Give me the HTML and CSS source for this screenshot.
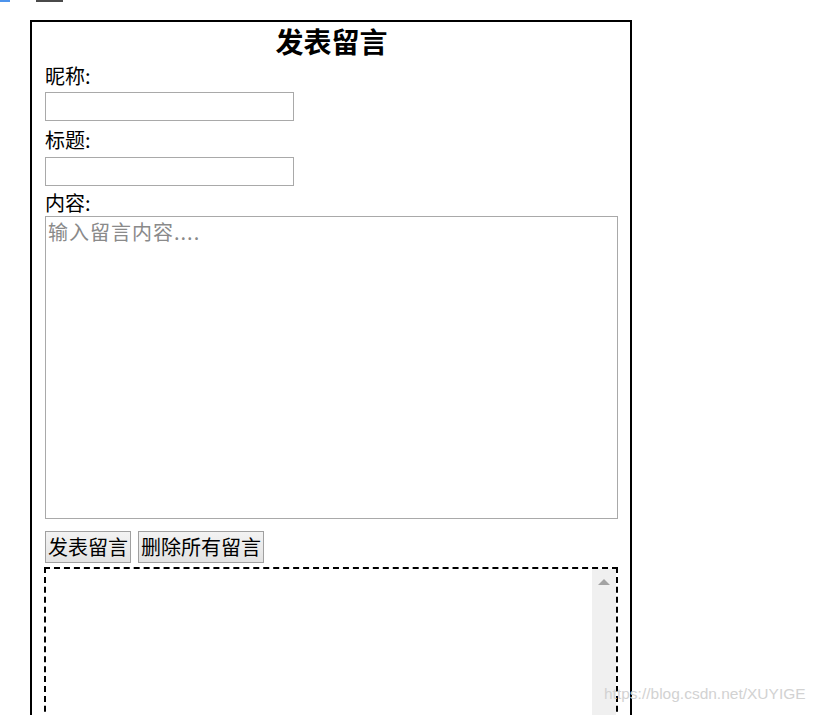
FILE: index.html
```html
<!DOCTYPE html>
<html lang="zh-CN">
<head>
  <meta charset="UTF-8">
  <title>发表留言</title>
  <link rel="stylesheet" href="styles.css">
</head>
<body>
  <div class="crumb"><span class="crumb-mark"></span><span class="crumb-text"></span></div>

  <div class="board">
    <h2 class="board-title">发表留言</h2>

    <label class="field-label first" for="nick">昵称:</label>
    <input class="field-input" id="nick" type="text" autocomplete="off">

    <label class="field-label second" for="title">标题:</label>
    <input class="field-input second" id="title" type="text" autocomplete="off">

    <label class="field-label third" for="content">内容:</label>
    <textarea class="field-text" id="content" placeholder="输入留言内容...."></textarea>

    <div class="buttons">
      <button id="postBtn">发表留言</button>
      <button id="clearBtn">删除所有留言</button>
    </div>

    <!-- 留言列表 -->
    <div class="messages">
      <div id="msgList" class="msg-list"></div>
      <div class="scroll-track"><span class="scroll-up"></span></div>
    </div>
  </div>

  <div class="watermark">https://blog.csdn.net/XUYIGE</div>
</body>
</html>
```

FILE: styles.css
```css
body {
  margin: 0;
  background: #fff;
  color: #000;
  font-family: "Noto Sans CJK SC", "Liberation Sans", sans-serif;
}

.crumb {
  display: flex;
  height: 3px;
  overflow: hidden;
}

.crumb-mark {
  width: 10px;
  height: 2px;
  background: #4d94ec;
}

.crumb-text {
  width: 27px;
  height: 2px;
  margin-left: 26px;
  background: #4a4a4a;
}

.board {
  display: flex;
  flex-direction: column;
  align-items: flex-start;
  width: 573px;
  margin: 17px 0 0 30px;
  padding: 0 12px 40px 13px;
  border: 2px solid #000;
}

.board-title {
  align-self: stretch;
  margin: 0;
  font-size: 28px;
  line-height: 38px;
  font-weight: 700;
  text-align: center;
}

.field-label {
  font-size: 20px;
  line-height: 24px;
}

.field-label.first { margin-top: 4px; }
.field-label.second { margin-top: 7px; }
.field-label.third { margin-top: 5px; }

.field-input {
  box-sizing: border-box;
  width: 249px;
  height: 29px;
  margin: 4px 0 0;
  padding: 1px 3px;
  border: 1px solid #a9a9a9;
  font-size: 18px;
  font-family: inherit;
}

.field-input.second {
  margin-top: 5px;
}

.field-text {
  box-sizing: border-box;
  width: 573px;
  height: 303px;
  margin: 1px 0 0;
  padding: 0 2px;
  border: 1px solid #a9a9a9;
  font-size: 20px;
  line-height: 30px;
  font-family: inherit;
  resize: none;
}

.field-text::placeholder {
  color: #8a8a8a;
  letter-spacing: 1px;
}

.buttons {
  display: flex;
  gap: 7px;
  margin-top: 12px;
}

button {
  height: 32px;
  padding: 0 2px;
  border: 1px solid #a0a0a0;
  background: linear-gradient(#f3f3f3, #e3e3e3);
  color: #000;
  font-size: 20px;
  line-height: 30px;
  font-family: inherit;
  cursor: pointer;
}

.messages {
  display: flex;
  width: 570px;
  height: 240px;
  margin: 4px 0 0 -1px;
  border: 2px dashed #000;
}

.msg-list {
  flex: 1;
  overflow: hidden;
}

.scroll-track {
  display: flex;
  justify-content: center;
  width: 24px;
  background: #f0f0f0;
}

.scroll-up {
  width: 0;
  height: 0;
  margin-top: 10px;
  border-left: 6px solid transparent;
  border-right: 6px solid transparent;
  border-bottom: 6px solid #a3a3a3;
}

.watermark {
  position: absolute;
  left: 604px;
  top: 685px;
  font-family: "Liberation Sans", Arial, sans-serif;
  font-size: 15.5px;
  color: #d2d2d2;
  white-space: nowrap;
}
```
